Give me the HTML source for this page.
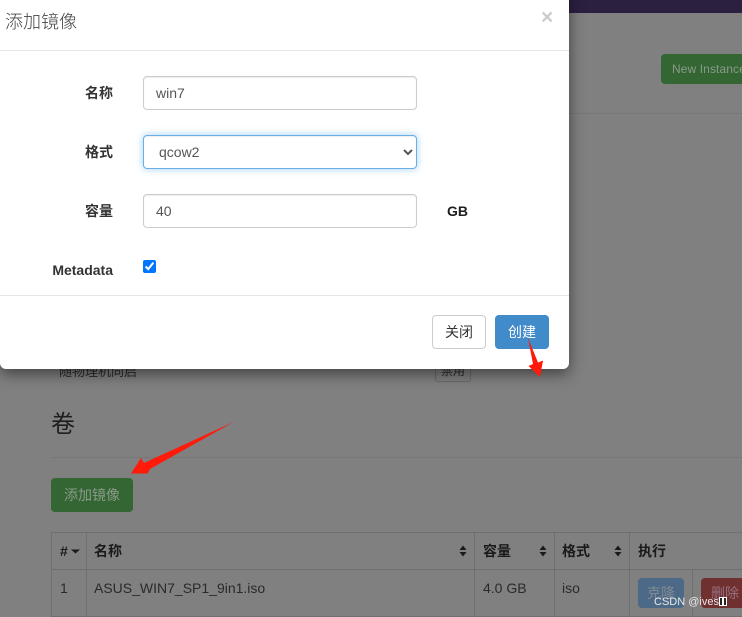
<!DOCTYPE html>
<html lang="zh-CN">
<head>
<meta charset="utf-8">
<title>添加镜像</title>
<style>
html,body{margin:0;padding:0;width:742px;height:617px;overflow:hidden;background:#808080;}
body{position:relative;font-family:"Liberation Sans","Noto Sans CJK SC",sans-serif;font-size:14px;color:#1e1e1e;}
.a{position:absolute;box-sizing:border-box;white-space:nowrap;}
.btn{border-radius:4px;text-align:center;border:1px solid transparent;}
.top{left:0;top:0;width:742px;height:13px;background:#2c2040;}
.hr{height:1px;background:#777;}
.cell{border:1px solid #6f6f6f;line-height:20px;padding:8px 8px 8px 7px;color:#2a2a2a;}
.th{font-weight:bold;height:38px;color:#1a1a1a;}
.modal{left:0;top:-10px;width:569px;height:379px;background:#fff;border-radius:0 0 6px 6px;box-shadow:0 5px 15px rgba(0,0,0,.5);}
.label{font-weight:bold;text-align:right;right:629px;line-height:20px;font-size:14px;color:#333;}
.in{left:143px;width:274px;height:34px;border:1px solid #ccc;border-radius:4px;padding:6px 12px;font:14px/20px "Liberation Sans",sans-serif;color:#555;box-shadow:inset 0 1px 1px rgba(0,0,0,.075);background:#fff;}
select.in{border-color:#66afe9;box-shadow:inset 0 1px 1px rgba(0,0,0,.075),0 0 8px rgba(102,175,233,.6);outline:0;padding-left:11px;}
.sort{width:8px;height:12px;}
.box{display:inline-block;width:4px;height:9px;border:1px solid #fff;box-sizing:border-box;vertical-align:-1px;background:#222;}
</style>
</head>
<body>
<div class="a top"></div>
<div class="a btn" style="left:661px;top:54px;width:110px;height:30px;background:#336633;color:#8a9a8a;font-size:12px;line-height:28px;text-align:left;padding-left:10px;letter-spacing:.1px;">New Instance</div>
<div class="a hr" style="left:0;top:113px;width:742px;"></div>
<div class="a" style="left:59px;top:362px;line-height:20px;font-size:13px;color:#2a2a2a;">随物理机同启</div>
<div class="a btn" style="left:435px;top:360px;width:36px;height:22px;border-color:#6a6a6a;border-radius:3px;font-size:12px;line-height:20px;color:#2a2a2a;">禁用</div>
<div class="a" style="left:51px;top:408px;font-size:24px;line-height:34px;color:#1e1e1e;">卷</div>
<div class="a hr" style="left:51px;top:457px;width:691px;"></div>
<div class="a btn" style="left:51px;top:478px;width:82px;height:34px;background:#336633;color:#8a9a8a;line-height:32px;">添加镜像</div>

<div class="a cell th" style="left:51px;top:532px;width:36px;padding-left:8px;">#</div>
<svg class="a" style="left:71px;top:549px;" width="9" height="5"><path d="M0 0.500H9L4.500 4.500Z" fill="#1a1a1a"/></svg>
<div class="a cell th" style="left:86px;top:532px;width:389px;">名称</div>
<div class="a cell th" style="left:474px;top:532px;width:81px;padding-left:8px;">容量</div>
<div class="a cell th" style="left:554px;top:532px;width:76px;">格式</div>
<div class="a cell th" style="left:629px;top:532px;width:114px;padding-left:8px;">执行</div>
<svg class="a sort" style="left:459px;top:545px;" viewBox="0 0 8 12"><path d="M4 0.500L7.500 5H0.500ZM4 11.500L0.500 7H7.500Z" fill="#1a1a1a"/></svg>
<svg class="a sort" style="left:539px;top:545px;" viewBox="0 0 8 12"><path d="M4 0.500L7.500 5H0.500ZM4 11.500L0.500 7H7.500Z" fill="#1a1a1a"/></svg>
<svg class="a sort" style="left:614px;top:545px;" viewBox="0 0 8 12"><path d="M4 0.500L7.500 5H0.500ZM4 11.500L0.500 7H7.500Z" fill="#1a1a1a"/></svg>
<div class="a cell" style="left:51px;top:569px;width:36px;height:48px;padding-left:8px;">1</div>
<div class="a cell" style="left:86px;top:569px;width:389px;height:48px;">ASUS_WIN7_SP1_9in1.iso</div>
<div class="a cell" style="left:474px;top:569px;width:81px;height:48px;padding-left:8px;">4.0 GB</div>
<div class="a cell" style="left:554px;top:569px;width:76px;height:48px;">iso</div>
<div class="a cell" style="left:629px;top:569px;width:64px;height:48px;"></div>
<div class="a cell" style="left:692px;top:569px;width:51px;height:48px;"></div>
<div class="a btn" style="left:638px;top:578px;width:46px;height:30px;background:#4c6a87;color:#808a95;line-height:28px;">克隆</div>
<div class="a btn" style="left:701px;top:578px;width:60px;height:30px;background:#70302f;color:#957080;line-height:28px;text-align:left;padding-left:9px;">删除</div>

<div class="a modal">
  <div class="a" style="left:5px;top:21px;font-size:18px;line-height:22px;color:#444;font-weight:300;">添加镜像</div>
  <div class="a" style="left:541px;top:17px;font-size:21px;font-weight:bold;line-height:21px;color:#000;opacity:.2;">×</div>
  <div class="a" style="left:0;top:60px;width:569px;height:1px;background:#e5e5e5;"></div>
  <div class="a" style="left:0;top:305px;width:569px;height:1px;background:#e5e5e5;"></div>
</div>

<div class="a label" style="top:83px;">名称</div>
<input class="a in" style="top:76px;" type="text" value="win7">
<div class="a label" style="top:142px;">格式</div>
<select class="a in" style="top:135px;"><option>qcow2</option></select>
<div class="a label" style="top:201px;">容量</div>
<input class="a in" style="top:194px;" type="text" value="40">
<div class="a" style="left:447px;top:201px;font-weight:bold;font-size:14px;line-height:20px;">GB</div>
<div class="a label" style="top:260px;">Metadata</div>
<input class="a" style="left:143px;top:260px;margin:0;width:13px;height:13px;" type="checkbox" checked>

<div class="a btn" style="left:432px;top:315px;width:54px;height:34px;border-color:#ccc;background:#fff;line-height:32px;color:#333;">关闭</div>
<div class="a btn" style="left:495px;top:315px;width:54px;height:34px;background:#428bca;color:#fff;line-height:32px;">创建</div>

<svg class="a" style="left:0;top:0;" width="742" height="617">
  <path d="M233.500 422L150 469L147.500 473.500L131 473.500L141 458L144 463Z" fill="#ff1a0a"/>
  <path d="M528 338L538 362.500L543 360.500L540 377L528.500 366L533 364Z" fill="#ff1a0a"/>
</svg>

<div class="a" style="left:654px;top:595px;color:#e8e8e8;font-size:11px;line-height:14px;">CSDN @ives<span class="box"></span><span class="box"></span></div>
</body>
</html>
